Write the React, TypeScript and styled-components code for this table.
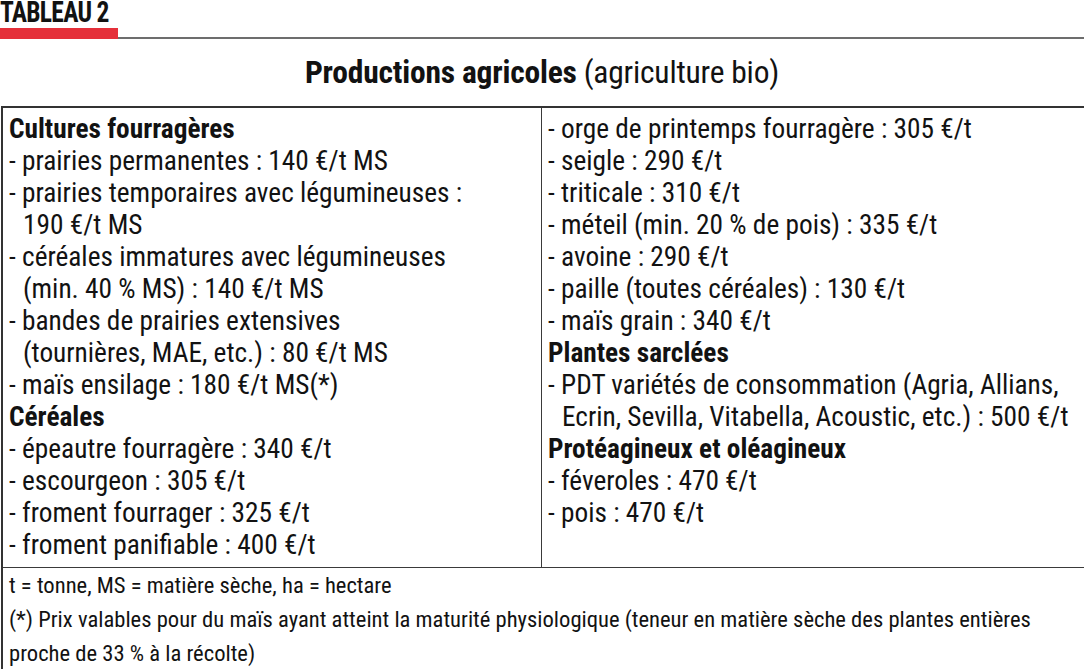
import React from 'react';
import styled, { createGlobalStyle } from 'styled-components';

const Global = createGlobalStyle`
  html, body {
    margin: 0;
    padding: 0;
    background: #ffffff;
    overflow: hidden;
  }
  body {
    font-family: "Roboto Condensed", Roboto, "Liberation Sans", sans-serif;
    color: #121212;
  }
`;

const Page = styled.div`
  width: 1084px;
  height: 669px;
  overflow: hidden;
`;

const Header = styled.div`
  display: flex;
  flex-direction: column;
`;

const Label = styled.div`
  font-size: 29px;
  font-weight: 700;
  line-height: 25px;
  letter-spacing: -0.8px;
  height: 28px;
  transform: scaleX(0.88);
  transform-origin: left center;
`;

const Rule = styled.div`
  display: flex;
  align-items: flex-end;
  height: 11px;
`;

const RedBar = styled.div`
  width: 118px;
  height: 11px;
  background: #e5303a;
`;

const GrayLine = styled.div`
  flex: 1;
  height: 2px;
  background: #6d6d6d;
`;

const Title = styled.h1`
  margin: 0;
  padding-top: 17px;
  height: 50px;
  text-align: center;
  font-size: 31.5px;
  line-height: 34px;
  font-weight: 400;
  letter-spacing: -0.2px;
  strong {
    font-weight: 700;
  }
`;

const Table = styled.div`
  margin-left: 1px;
  width: 1081px;
  border: 2px solid #333333;
  border-bottom: none;
  display: grid;
  grid-template-columns: 539px 1fr;
`;

const Cell = styled.div<{ $divider?: boolean }>`
  padding: 5px 6px 6px 6px;
  border-right: ${(p) => (p.$divider ? '1.5px solid #3a3a3a' : 'none')};
  border-bottom: 1.5px solid #3a3a3a;
  font-size: 27.3px;
  line-height: 32px;
`;

const Heading = styled.div`
  font-weight: 700;
`;

const Item = styled.div`
  white-space: nowrap;
`;

const Cont = styled.div`
  white-space: nowrap;
  padding-left: 14px;
`;

const Footer = styled.div`
  grid-column: 1 / span 2;
  padding: 1px 6px 0 6px;
  font-size: 22.6px;
  line-height: 34px;
  white-space: nowrap;
`;

const App: React.FC = () => {
  return (
    <Page>
      <Global />
      <Header>
        <Label>TABLEAU 2</Label>
        <Rule>
          <RedBar />
          <GrayLine />
        </Rule>
      </Header>

      <Title>
        <strong>Productions agricoles</strong> (agriculture bio)
      </Title>

      <Table>
        <Cell $divider>
          <Heading>Cultures fourragères</Heading>
          <Item>- prairies permanentes : 140 €/t MS</Item>
          <Item>- prairies temporaires avec légumineuses :</Item>
          <Cont>190 €/t MS</Cont>
          <Item>- céréales immatures avec légumineuses</Item>
          <Cont>(min. 40 % MS) : 140 €/t MS</Cont>
          <Item>- bandes de prairies extensives</Item>
          <Cont>(tournières, MAE, etc.) : 80 €/t MS</Cont>
          <Item>- maïs ensilage : 180 €/t MS(*)</Item>
          <Heading>Céréales</Heading>
          <Item>- épeautre fourragère : 340 €/t</Item>
          <Item>- escourgeon : 305 €/t</Item>
          <Item>- froment fourrager : 325 €/t</Item>
          <Item>- froment panifiable : 400 €/t</Item>
        </Cell>
        <Cell>
          <Item>- orge de printemps fourragère : 305 €/t</Item>
          <Item>- seigle : 290 €/t</Item>
          <Item>- triticale : 310 €/t</Item>
          <Item>- méteil (min. 20 % de pois) : 335 €/t</Item>
          <Item>- avoine : 290 €/t</Item>
          <Item>- paille (toutes céréales) : 130 €/t</Item>
          <Item>- maïs grain : 340 €/t</Item>
          <Heading>Plantes sarclées</Heading>
          <Item>- PDT variétés de consommation (Agria, Allians,</Item>
          <Cont>Ecrin, Sevilla, Vitabella, Acoustic, etc.) : 500 €/t</Cont>
          <Heading>Protéagineux et oléagineux</Heading>
          <Item>- féveroles : 470 €/t</Item>
          <Item>- pois : 470 €/t</Item>
        </Cell>
        <Footer>
          <div>t = tonne, MS = matière sèche, ha = hectare</div>
          <div>
            (*) Prix valables pour du maïs ayant atteint la maturité physiologique (teneur en matière sèche des plantes entières
          </div>
          <div>proche de 33 % à la récolte)</div>
        </Footer>
      </Table>
    </Page>
  );
};

export default App;
